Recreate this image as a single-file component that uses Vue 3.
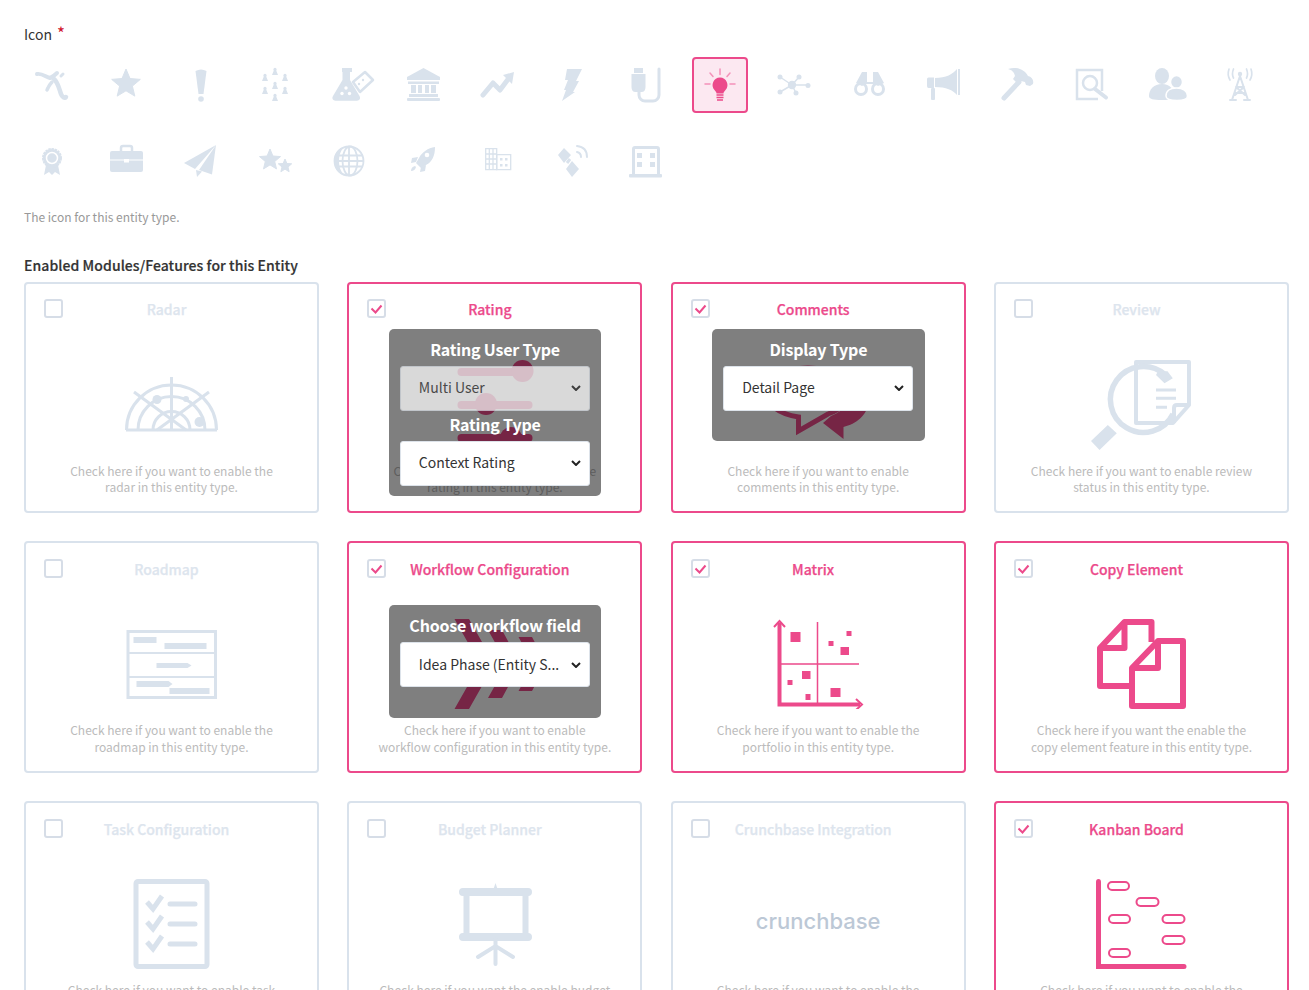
<script setup>
const at = (dx, markup) => `<g transform="translate(${dx} 0)">${markup}</g>`
const star = (cx, cy, r) => {
  const pts = []
  for (let i = 0; i < 10; i++) {
    const rad = i % 2 ? r * 0.45 : r
    const a = -Math.PI / 2 + (i * Math.PI) / 5
    pts.push(`${(cx + rad * Math.cos(a)).toFixed(1)},${(cy + rad * Math.sin(a)).toFixed(1)}`)
  }
  return `<polygon points="${pts.join(' ')}" stroke="currentColor" stroke-width="1" stroke-linejoin="round"/>`
}
const pawn = (x, y) => `<circle cx="${x}" cy="${y - 2.6}" r="1.6"/><path d="M${x - 1} ${y - 2}h2l2 5h-6z"/>`
const line = 'fill="none" stroke="currentColor" stroke-linecap="round" stroke-linejoin="round"'

const pickerIcons = [
  // tools
  `<g ${line}><path stroke-width="4" d="M13 17c5-1 9 3 13 4 3-1 5-3 7-5"/><path stroke-width="4.5" d="M29 21c5 4 6 10 8 16 1 3 4 5 5 3"/><path stroke-width="3.5" d="M28 25c-3 3-4 6-5 8"/><path stroke-width="3" d="M37 19l2-2"/></g>`,
  star(28, 27, 15),
  `<path d="M22.5 14q5.500-3 11 0L30.500 37h-5z"/><circle cx="28" cy="42" r="2.800"/>`,
  at(-1, pawn(29, 15) + pawn(19, 21) + pawn(39, 21) + pawn(29, 29) + pawn(19, 34) + pawn(39, 34) + pawn(29, 41)),
  // flasks
  `<path d="M21 11h10v4h-2v8l9.500 16c1.500 2.500 0 4.700-2.500 4.700H14.500c-2.500 0-4-2.200-2.500-4.700L21.500 23v-8H21z"/><circle cx="25" cy="31" r="1.700" fill="#fff"/><circle cx="21" cy="36.500" r="1.700" fill="#fff"/><circle cx="28.500" cy="36.500" r="1.700" fill="#fff"/><path d="M44 15l8 8-13 12-7-10z" fill="none" stroke="currentColor" stroke-width="2.500" stroke-linejoin="round"/><circle cx="42" cy="23" r="1.200"/><circle cx="38" cy="27" r="1.200"/>`,
  // bank
  at(-2, `<path d="M30.500 11L47 20v3H14v-3z"/><rect x="15" y="24.500" width="31" height="2.500"/><rect x="18" y="28" width="5" height="8"/><rect x="25" y="28" width="4" height="8"/><rect x="32" y="28" width="4" height="8"/><rect x="38" y="28" width="5" height="8"/><rect x="16" y="37" width="29" height="3"/><rect x="14" y="41" width="33" height="3" rx="1"/>`),
  // trend
  at(-2, `<path ${line} stroke-width="5" stroke-linecap="butt" stroke-linejoin="miter" d="M15 38l10-12 7 7 9-12"/><path d="M46 15l-11 3 9 9z"/>`),
  // bolt
  `<path d="M23 12h15l-6 12h3l-6 11h2L18 44l4-11h-2l4-10h-3z"/>`,
  // plug
  at(-3, `<path d="M19 11h9v5h-9z"/><path d="M16.500 17h14v13q0 5-4 5h-6q-4 0-4-5z"/><path ${line} stroke-width="3" d="M24 35v3a6 6 0 0 0 6 6h8a6 6 0 0 0 6-6V12"/>`),
  // bulb
  `<path d="M28 20.500a7.500 7.500 0 0 1 5.500 12.500c-1.500 1.800-2 2.500-2 3.500h-7c0-1-.5-1.700-2-3.500A7.500 7.500 0 0 1 28 20.500z"/><path d="M24.500 38h7M24.500 40.500h7M25 43h6" stroke="currentColor" stroke-width="1.500"/><path d="M24 24.500a4 4 0 0 0-1.500 4" ${line} stroke="#fff" stroke-width="1"/><g ${line} stroke-width="1.500" opacity=".55"><path d="M28 12v5.500M18 16l3 3.500M38 16l-3 3.500M13 27h5M38 27h5"/></g>`,
  // network
  at(-2, `<g ${line} stroke-width="1.500"><path d="M15 20l12 8M34 20l-7 8M43 28H27M31 36l-4-8M15 35l12-7"/></g><circle cx="27" cy="28" r="4.200"/><circle cx="15" cy="20" r="2.500"/><circle cx="34" cy="20" r="2.500"/><circle cx="43" cy="28.500" r="2.500"/><circle cx="31" cy="36" r="2.500"/><circle cx="15" cy="35" r="2.500"/>`),
  // binoculars
  at(-1, `<path d="M16 26l6-11h5v10h6V15h5l6 11-6 3-3-2h-10l-3 2z"/><g fill="none" stroke="currentColor" stroke-width="3"><circle cx="21" cy="32" r="5.500"/><circle cx="38" cy="32" r="5.500"/></g>`),
  // megaphone
  at(-1, `<path d="M21 21c11 0 18-4 22-9v26c-4-5-11-8-22-8z"/><rect x="44" y="12" width="2" height="26"/><path d="M13 22q0-1.500 1.500-1.500H20V31h-5.500Q13 31 13 29z"/><rect x="17" y="31" width="4" height="12" rx="1"/>`),
  // hammer
  at(-2, `<path d="M21 12c9-3 17 1 20 7 4 1 6 4 5 8l-3 2-4-1-1-3-4-1-3 3-5-5 2-3c-1-4-3-6-7-7z"/><path d="M32 25L17 41" fill="none" stroke="currentColor" stroke-width="5" stroke-linecap="round"/>`),
  // document search
  at(-2, `<path d="M40 34V13H15v29h21" fill="none" stroke="currentColor" stroke-width="2.500"/><circle cx="28" cy="26" r="7" fill="#fff" stroke="currentColor" stroke-width="2.500"/><path d="M33 32l11 8.500" fill="none" stroke="currentColor" stroke-width="4" stroke-linecap="round"/>`),
  // users
  at(-1, `<ellipse cx="25" cy="19" rx="7" ry="8"/><path d="M12 39c0-7 5-12 13-12s12 5 12 12c0 3-3 4-12 4S12 42 12 39z"/><g stroke="#fff" stroke-width="1.500"><ellipse cx="39.500" cy="25" rx="6" ry="6.500"/><path d="M29 39c0-5 4-8 10.500-8S50.500 34 50.500 39c0 3-3 4.500-10.500 4.500S29 42 29 39z"/></g>`),
  // tower
  at(-2, `<g ${line} stroke-width="2"><path d="M30 19l-8 24M30 19l8 24M26.500 30h7M25 36h10M26 30l9 8M34 30l-9 8M20 43h6M34 43h6"/></g><circle cx="30" cy="17" r="2.200"/><g ${line} stroke-width="1.700"><path d="M23.500 12q-2 5 0 9M36.500 12q2 5 0 9M19 12q-2 6 1 11M41 12q2 6-1 11"/></g>`),
  // award
  `<path d="M22 32l-2 10 5-3 3 3 3-3 5 3-2-10z"/><circle cx="28" cy="25" r="9" stroke="currentColor" stroke-width="2" stroke-dasharray="2.500 .7"/><circle cx="28" cy="25" r="5.500" fill="none" stroke="#fff" stroke-width="1.500"/>`,
  // briefcase
  at(-1, `<rect x="13" y="18" width="33" height="21" rx="2"/><path d="M24 18v-3q0-2 2-2h7q2 0 2 2v3" fill="none" stroke="currentColor" stroke-width="2.500"/><path d="M13 27h33" stroke="#fff" stroke-width="1.200"/><rect x="27" y="26" width="5" height="3.500" fill="#fff"/>`),
  // plane
  at(-2, `<path d="M45 12L13 30l11 6z"/><path d="M45 12L28 37l13 4.500z"/><path d="M25 37l1 7 5-5.500z"/>`),
  at(-1, star(24, 27, 11) + star(39, 33, 7)),
  // globe
  at(-2, `<g fill="none" stroke="currentColor" stroke-width="1.800"><circle cx="30" cy="28" r="14.500"/><ellipse cx="31" cy="28" rx="7.500" ry="14.500"/><path d="M30 13.500v29M16 22.500h28M16 28h28M16 33.500h28"/></g><path d="M26 13.500c-7 1.500-11 7.500-11 14.500s4 13 11 14.500c-4-3-6-8-6-14.500s2-11.500 6-14.500z"/>`),
  // rocket
  at(-2, `<path d="M42 14c-7 1-13 5-16 11l-3 5 5 5 5-3c6-3 9-9 9-18z"/><path d="M25 24l-6 1-1 5 5-1zM33 32l-1 6-5 1 1-5zM22 33q-4 1-4 5 4 0 5-4z"/><circle cx="34" cy="22" r="2.300" fill="#fff"/>`),
  // buildings
  at(-3, `<g fill="none" stroke="currentColor" stroke-width="1.300"><path d="M18.700 15.700h11v21h-11zM18.700 21h11M18.700 26h11M18.700 31h11M22.300 15.700v21M26 15.700v21"/><path d="M29.700 21.700h14v15h-14z"/></g><rect x="33" y="25" width="2.500" height="2.500"/><rect x="38" y="25" width="2.500" height="2.500"/><rect x="33" y="31" width="2.500" height="2.500"/><rect x="38" y="31" width="2.500" height="2.500"/>`),
  // satellite
  at(-3, `<path d="M23 15l7 7-7 8-6-8zM31 28l7 8-7 8-6-8z"/><path d="M26 30l3-4" stroke="currentColor" stroke-width="3"/><g ${line} stroke-width="2"><path d="M36 19q4 1 4 5M36 13q10 1 10 11"/></g>`),
  // building
  at(-4, `<path d="M19.500 42V16q0-1.500 1.500-1.500h22q1.500 0 1.500 1.500v26" fill="none" stroke="currentColor" stroke-width="3"/><rect x="15" y="41" width="33" height="3.500" rx="1"/><rect x="23" y="20" width="5" height="5"/><rect x="36" y="20" width="5" height="5"/><rect x="23" y="29" width="5" height="5"/><rect x="36" y="29" width="5" height="5"/>`)
]
const selectedIcon = 9

const radarIcon = `<g fill="none" stroke="currentColor" stroke-width="3"><path d="M14.500 70a45 45 0 0 1 90 0M26 70a33.500 33.500 0 0 1 67 0M41 70a18.500 18.500 0 0 1 37 0M14 70h91"/><path d="M59.500 17v53M22 32l52 38M97 32L45 70"/></g><circle cx="45" cy="39.500" r="4.500"/><circle cx="74" cy="39" r="3"/><circle cx="87.500" cy="62" r="5"/>`
const sliderIcon = `<rect x="22.500" y="8" width="75" height="8" rx="4"/><circle cx="87.500" cy="11" r="11"/><rect x="22.500" y="41" width="75" height="8" rx="4"/><circle cx="51" cy="44" r="11"/><rect x="22.500" y="74" width="75" height="8" rx="4"/><circle cx="76" cy="78" r="11"/>`
const bubblesIcon = `<path fill="none" stroke="currentColor" stroke-width="5" d="M40.500 71V57C20 54 8 44 8 32 8 18 28 8 50 8s40 10 40 24c0 11-9 18-20 22z"/><path d="M85.500 79V67C98 64 110 55 110 42c0-9-5-15-14-18 0 14-8 26-23 32l-8 7z"/>`
const reviewIcon = `<path fill="none" stroke="currentColor" stroke-width="4" stroke-linejoin="round" d="M55 2h53v43L92 63H55zM108 45H96q-3 0-3 3v15"/><path d="M75 30h20M75 38.300h20M75 47.300h11" stroke="currentColor" stroke-width="3"/><path fill="none" stroke="currentColor" stroke-width="5.500" d="M84 14.500A33 33 0 1 0 92 54"/><path d="M78.500 8.300l3 3 5 0 5.300 7-8.300 5-8.500-8.300z"/><path d="M26.800 65l9 8.300L18.500 90 10 81z"/>`
const roadmapIcon = `<rect x="16" y="12.500" width="87.500" height="66" fill="none" stroke="currentColor" stroke-width="3"/><path d="M16 34h87M16 58h87" stroke="currentColor" stroke-width="2"/><rect x="21.500" y="18" width="23" height="6"/><rect x="52.500" y="24" width="42" height="6"/><path d="M44.500 44h31l4 2.500-4 2.500h-31z"/><path d="M24.500 62h32l4 3-4 3h-32z"/><rect x="57.500" y="69" width="40" height="6"/>`
const chevronIcon = `<path d="M19.500 0H34l25.500 45L34 90H19.500L45 45zM53 11h14l18.500 34L67 79H53l19-34zM83.500 18H97l14.500 27L97 72H83.500L98.500 45z"/>`
const matrixIcon = at(-1, `<g fill="none" stroke="currentColor"><path stroke-width="4" d="M22.500 4v81.500H103"/><path stroke-width="2" d="M17 8l5.500-6L28 8M99 80l6 5.500-6 5.500"/><path stroke-width="1.500" d="M60.500 3v82M24 45h78"/></g><rect x="33.500" y="13" width="10" height="10"/><rect x="89.500" y="12" width="5" height="5"/><rect x="71.500" y="22" width="5" height="5"/><rect x="83.500" y="28" width="8.500" height="8"/><rect x="45" y="52" width="8.500" height="8"/><rect x="30.500" y="61" width="5" height="5"/><rect x="48.500" y="75" width="5" height="6"/><rect x="73.500" y="69" width="10" height="9"/>`)
const copyIcon = at(-2, `<g fill="none" stroke="currentColor" stroke-width="6" stroke-linejoin="round"><path d="M51 67H21V29L45.500 3h27v20M45.500 3v26H21"/><path d="M79 22h25v65H53V49zM79 22v27H53"/></g>`)
const taskIcon = at(-1, `<rect x="25" y="2.500" width="71" height="85" rx="2" fill="none" stroke="currentColor" stroke-width="5"/><g fill="none" stroke="currentColor" stroke-width="5"><path d="M36 23l6 7 9-13M36 43l6 7 9-13M36 63l6 7 9-13"/><path stroke-linecap="round" d="M59 25h25M59 45h25M59 65h25"/></g>`)
const plannerIcon = at(-2, `<g fill="none" stroke="currentColor"><path stroke-width="6" d="M33.500 13v45M92.500 13v45"/><path stroke-width="8" stroke-linecap="round" d="M30 13h65M30 58h65"/><path stroke-width="4" stroke-linecap="round" d="M62.500 60v25M45 78l17.500-11L80 78"/></g><path d="M60.500 10l2-6 2 6z"/>`)
const kanbanIcon = at(-2, `<path d="M17 3q0-3 2.500-3T22 3v82h83q2.500 0 2.500 2.500T105 90H17z"/><g fill="none" stroke="currentColor" stroke-width="2"><rect x="29" y="3" width="21" height="8" rx="4"/><rect x="57.500" y="19" width="22" height="8" rx="4"/><rect x="30" y="36" width="21" height="8" rx="4"/><rect x="83.500" y="36" width="22" height="8" rx="4"/><rect x="83.500" y="57" width="22" height="8" rx="4"/><rect x="30" y="70" width="21" height="8" rx="4"/></g>`)

const features = [
  { title: 'Radar', on: false, icon: radarIcon, desc: 'Check here if you want to enable the\nradar in this entity type.' },
  {
    title: 'Rating', on: true, icon: sliderIcon, desc: 'Check here if you want to enable the\nrating in this entity type.',
    settings: [
      { label: 'Rating User Type', value: 'Multi User', options: ['Single User', 'Multi User'], disabled: true },
      { label: 'Rating Type', value: 'Context Rating', options: ['Star Rating', 'Context Rating'] }
    ]
  },
  {
    title: 'Comments', on: true, icon: bubblesIcon, desc: 'Check here if you want to enable\ncomments in this entity type.',
    settings: [{ label: 'Display Type', value: 'Detail Page', options: ['Detail Page', 'Sidebar'] }]
  },
  { title: 'Review', on: false, icon: reviewIcon, desc: 'Check here if you want to enable review\nstatus in this entity type.' },
  { title: 'Roadmap', on: false, icon: roadmapIcon, desc: 'Check here if you want to enable the\nroadmap in this entity type.' },
  {
    title: 'Workflow Configuration', on: true, icon: chevronIcon, low: true, desc: 'Check here if you want to enable\nworkflow configuration in this entity type.',
    settings: [{ label: 'Choose workflow field', value: 'Idea Phase (Entity S...', options: ['Idea Phase (Entity S...'] }]
  },
  { title: 'Matrix', on: true, icon: matrixIcon, desc: 'Check here if you want to enable the\nportfolio in this entity type.' },
  { title: 'Copy Element', on: true, icon: copyIcon, desc: 'Check here if you want the enable the\ncopy element feature in this entity type.' },
  { title: 'Task Configuration', on: false, icon: taskIcon, desc: 'Check here if you want to enable task' },
  { title: 'Budget Planner', on: false, icon: plannerIcon, desc: 'Check here if you want the enable budget' },
  { title: 'Crunchbase Integration', on: false, wordmark: 'crunchbase', desc: 'Check here if you want to enable the' },
  { title: 'Kanban Board', on: true, icon: kanbanIcon, desc: 'Check here if you want to enable the' }
]
</script>

<template>
  <div class="page">
    <label class="field-label">Icon <span class="required">*</span></label>
    <div class="icon-picker">
      <div
        v-for="(icon, i) in pickerIcons"
        :key="i"
        class="icon-cell"
        :class="{ selected: i === selectedIcon }"
      >
        <svg viewBox="0 0 56 56" width="56" height="56" fill="currentColor" v-html="icon"></svg>
      </div>
    </div>
    <p class="help">The icon for this entity type.</p>

    <h3 class="section-title">Enabled Modules/Features for this Entity</h3>
    <div class="feature-grid">
      <div v-for="f in features" :key="f.title" class="feature" :class="{ on: f.on }">
        <div class="feature-head">
          <span class="checkbox">
            <svg v-if="f.on" viewBox="0 0 15 15" width="15" height="15">
              <path d="M2.500 7.500l4 4 6-7" fill="none" stroke="currentColor" stroke-width="2" />
            </svg>
          </span>
          <span class="feature-title">{{ f.title }}</span>
        </div>
        <div class="feature-art">
          <span v-if="f.wordmark" class="wordmark">{{ f.wordmark }}</span>
          <svg v-else viewBox="0 0 120 90" width="120" height="90" fill="currentColor" v-html="f.icon"></svg>
        </div>
        <p class="feature-desc">{{ f.desc }}</p>

        <div v-if="f.settings" class="settings" :class="{ low: f.low }">
          <template v-for="s in f.settings" :key="s.label">
            <div class="settings-label">{{ s.label }}</div>
            <select class="settings-select" :value="s.value" :disabled="s.disabled">
              <option v-for="o in s.options" :key="o">{{ o }}</option>
            </select>
          </template>
        </div>
      </div>
    </div>
  </div>
</template>

<style>
html,
body {
  margin: 0;
  background: #fff;
}
</style>

<style scoped>
.page {
  box-sizing: border-box;
  height: 990px;
  overflow: hidden;
  padding: 24px 20px 0 24px;
  font-family: "Noto Sans CJK SC", "Noto Sans", sans-serif;
  color: #333;
}

.field-label {
  display: block;
  height: 20px;
  margin-bottom: 13px;
  font-size: 14px;
  line-height: 20px;
}

.required {
  margin-left: 2px;
  font-size: 17px;
  line-height: 0;
  color: #d0142c;
}

.icon-picker {
  display: grid;
  grid-template-columns: repeat(17, 56px);
  column-gap: 18.25px;
  row-gap: 20px;
}

.icon-cell {
  box-sizing: border-box;
  width: 56px;
  height: 56px;
  color: #d9e2ec;
}

.icon-cell svg {
  display: block;
}

.icon-cell.selected {
  color: #ec4a8b;
  background: #fce8f1;
  border: 2px solid #ec4a8b;
  border-radius: 4px;
}

.icon-cell.selected svg {
  margin: -2px;
}

.help {
  margin: 20px 0 0;
  font-size: 12px;
  line-height: 16px;
  color: #999;
}

.section-title {
  margin: 30px 0 6.6px;
  font-size: 14px;
  font-weight: 500;
  line-height: 20px;
  letter-spacing: 0.07px;
  -webkit-text-stroke: 0.2px currentColor;
  color: #333;
}

.feature-grid {
  display: grid;
  grid-template-columns: repeat(4, 295px);
  column-gap: 28.33px;
  row-gap: 28px;
}

.feature {
  position: relative;
  box-sizing: border-box;
  height: 231.6px;
  padding: 15.75px 18px 0;
  background: #fff;
  border: 2px solid #d9e2ec;
  border-radius: 4px;
}

.feature.on {
  border-color: #ec4a8b;
}

.feature-head {
  display: flex;
  height: 21.25px;
  align-items: flex-start;
}

.checkbox {
  box-sizing: border-box;
  display: flex;
  flex: none;
  width: 19px;
  height: 19px;
  align-items: center;
  justify-content: center;
  border: 2px solid #d6dde7;
  border-radius: 3px;
  color: #ec4a8b;
}

.feature-title {
  flex: 1;
  padding-right: 29px;
  font-size: 14px;
  font-weight: 500;
  line-height: 20px;
  text-align: center;
  -webkit-text-stroke: 0.25px currentColor;
  color: #dde5ee;
}

.feature.on .feature-title {
  color: #ec4a8b;
}

.feature-art {
  display: flex;
  height: 90px;
  margin-top: 39px;
  justify-content: center;
  align-items: center;
  color: #d9e2ec;
}

.feature.on .feature-art {
  color: #ec4a8b;
}

.feature-art svg {
  display: block;
}

.wordmark {
  font-family: Inter, sans-serif;
  font-size: 22px;
  font-weight: 500;
  line-height: 26px;
  margin-bottom: 5px;
  color: #bcc8d6;
}

.feature-desc {
  margin: 13px 0 0;
  font-size: 12px;
  line-height: 16.8px;
  text-align: center;
  white-space: pre-line;
  color: #bbb;
}

.settings {
  position: absolute;
  top: 45px;
  left: 39.5px;
  box-sizing: border-box;
  width: 212.5px;
  min-height: 112.4px;
  padding: 7px 11px 10px;
  background: rgba(0, 0, 0, 0.5);
  border-radius: 5px;
}

.settings.low {
  top: 62px;
}

.settings-label {
  height: 30px;
  font-size: 16px;
  font-weight: 700;
  line-height: 27px;
  letter-spacing: -0.2px;
  text-align: center;
  color: #fff;
}

.settings-select {
  box-sizing: border-box;
  display: block;
  width: 190px;
  height: 45px;
  padding: 0 26px 2px 18px;
  font-family: inherit;
  font-size: 14px;
  color: #333;
  appearance: none;
  background: #fff url("data:image/svg+xml,%3Csvg xmlns='http://www.w3.org/2000/svg' width='10' height='6'%3E%3Cpath d='M1 1l4 4 4-4' fill='none' stroke='%23222' stroke-width='2'/%3E%3C/svg%3E") no-repeat right 8px center;
  border: 1px solid #dde3ea;
  border-radius: 3px;
}

.settings-select:disabled {
  opacity: 0.7;
}
</style>
